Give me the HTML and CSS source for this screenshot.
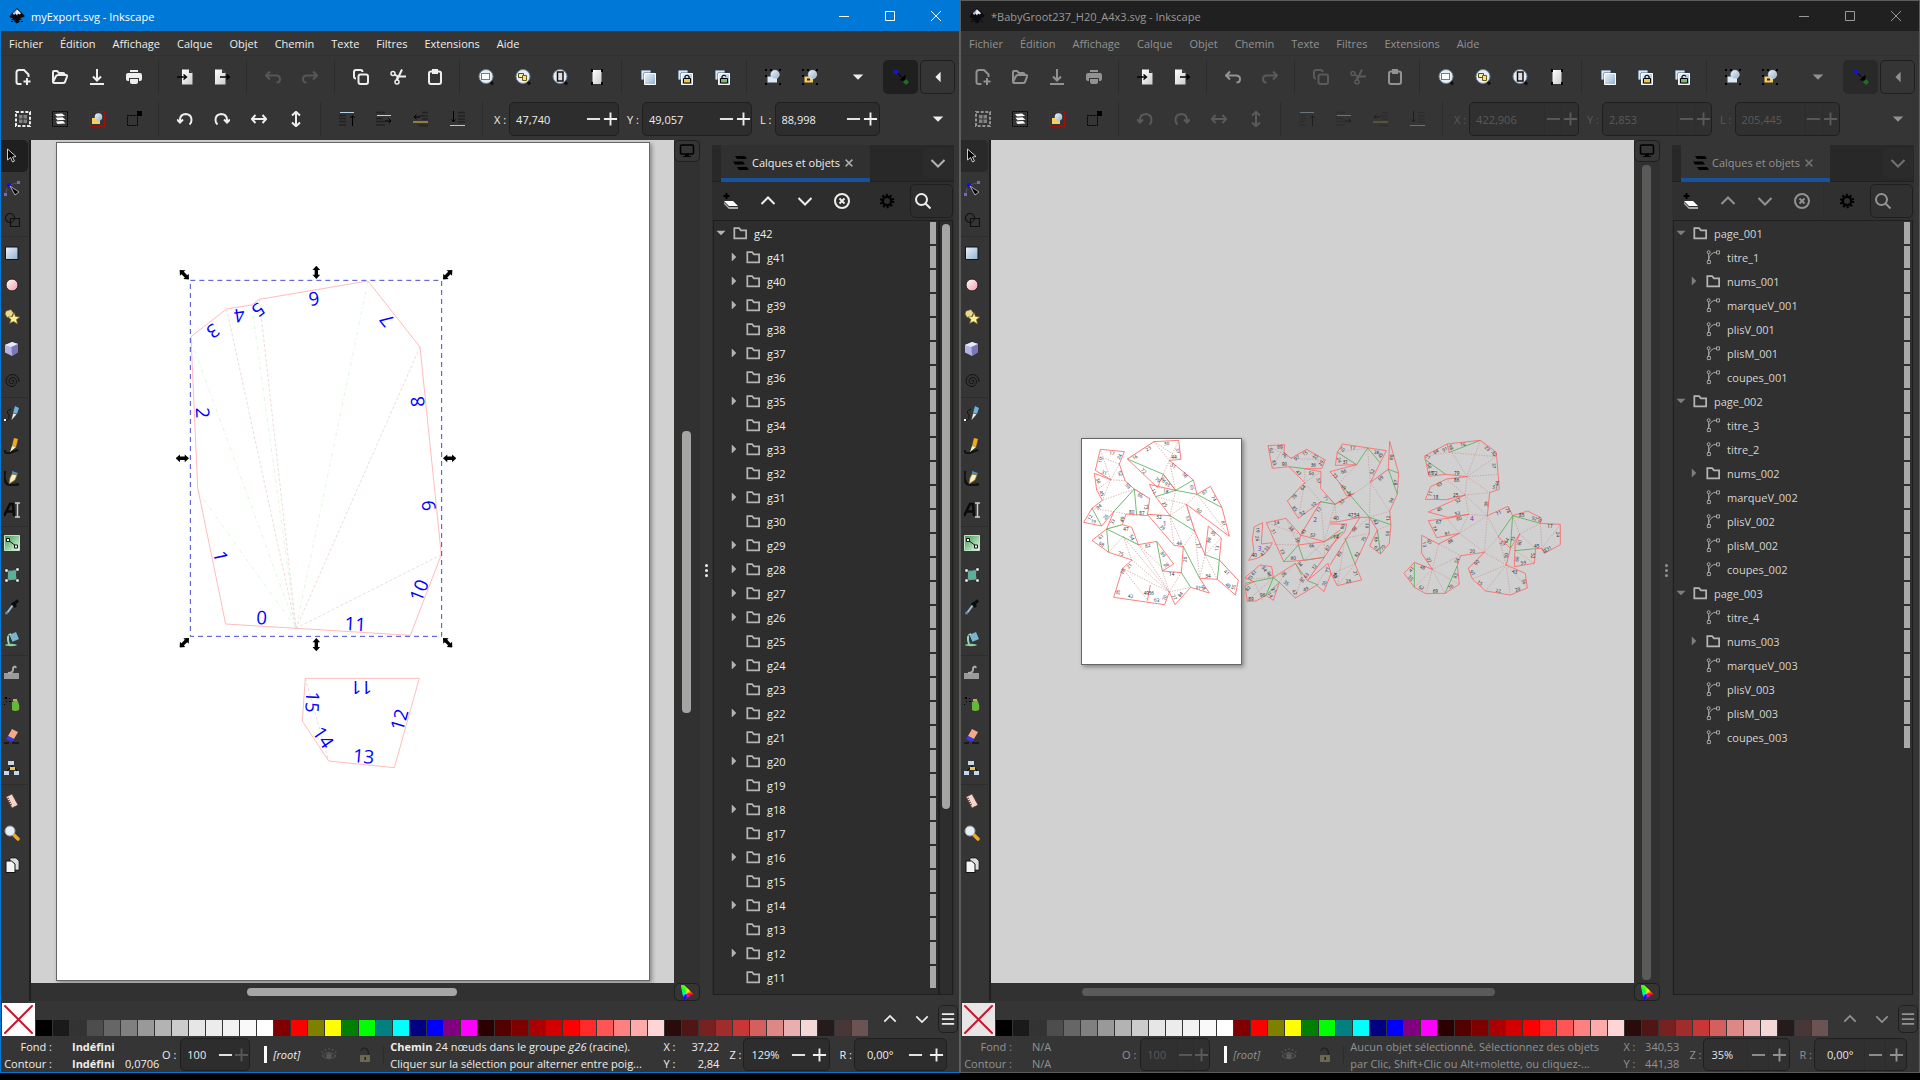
FILE: index.html
```html
<!DOCTYPE html>
<html lang="fr">
<head>
  <meta charset="UTF-8">
  <meta name="viewport" content="width=device-width, initial-scale=1.0">
  <title>Inkscape</title>
  <link rel="stylesheet" href="styles.css">
</head>
<body>
  <svg class="sprite" aria-hidden="true">
    <defs>
      <linearGradient id="g-blue" x1="0" y1="0" x2="1" y2="1"><stop offset="0" stop-color="#eef5fc"/><stop offset="1" stop-color="#8fb0d0"/></linearGradient>
      <linearGradient id="g-pink" x1="0" y1="0" x2="1" y2="1"><stop offset="0" stop-color="#fff"/><stop offset="1" stop-color="#f09aa4"/></linearGradient>
      <linearGradient id="g-page" x1="0" y1="0" x2="1" y2="1"><stop offset="0" stop-color="#fff"/><stop offset="1" stop-color="#ccc"/></linearGradient>
      <linearGradient id="g-green" x1="0" y1="0" x2="1" y2="1"><stop offset="0" stop-color="#3c9a4e"/><stop offset="1" stop-color="#e8f8ea"/></linearGradient>
    </defs>

    <!-- application and window -->
    <symbol id="logo" viewBox="0 0 16 16"><path d="M8 0 15.500 7.500Q16 9 13 9.500L11 10 13 11.500 10 12 11 13.500 8 15.500 5 13.500 6 12.500 2 12 4 10.500 1 9.500Q0 8.500 1 7.500Z" fill="#0a0a12"/><path d="M8 1.200 12 5.200 10.500 6.500 9 5.500 8 7.500 6.500 5.500 5 7 4 5.200Z" fill="#e8eefa"/><path d="M4 5.200 8 1.200 6 6Z" fill="#9aa6c0"/><path d="M2 13h2v1H2zM12 13h2v1h-2z" fill="#0a0a12"/></symbol>
    <symbol id="minimize" viewBox="0 0 16 16"><path d="M3 8.500H13" class="ln1"/></symbol>
    <symbol id="maximize" viewBox="0 0 16 16"><path d="M3.500 3.500h9v9h-9z" class="ln1"/></symbol>
    <symbol id="close" viewBox="0 0 16 16"><path d="M3 3l10 10M13 3 3 13" class="ln1"/></symbol>

    <!-- command bar -->
    <symbol id="new" viewBox="0 0 16 16"><path d="M6.500 15H3.500Q1.500 15 1.500 13V3.500Q1.500 1 4 1H9L13.500 5.500V8M12 9v7M8.500 12.500h7" class="ln2"/></symbol>
    <symbol id="open" viewBox="0 0 16 16"><path d="M1 13V3Q1 2 2 2H5L7 4H11Q12.500 4 12.500 6M1 13 4 7Q4.500 6 6 6H14Q15.500 6 15 7.500L13 13Q12.500 14 11 14H2Q1 14 1 13Z" class="ln2"/></symbol>
    <symbol id="save" viewBox="0 0 16 16"><path d="M8 0V11M4 7.500 8 11.500 12 7.500M1 15H15" class="ln2"/></symbol>
    <symbol id="print" viewBox="0 0 16 16"><path d="M4 1h8v2H4zM2 4H14Q16 4 16 6V10Q16 12 14 12H13V9H3V12H2Q0 12 0 10V6Q0 4 2 4ZM4 10h8v3q0 2-2 2H6q-2 0-2-2z" fill="currentColor"/></symbol>
    <symbol id="import" viewBox="0 0 16 16"><path d="M5 .5H12L15.500 4V15.500H5Z" fill="url(#g-page)"/><path d="M12 .5V4H15.500Z" fill="#333"/><path d="M0 8H9M6.500 5.500 9.500 8 6.500 10.500" fill="none" stroke="#000" stroke-width="1.400"/></symbol>
    <symbol id="export" viewBox="0 0 16 16"><path d="M1 .5H8L11.500 4V15.500H1Z" fill="url(#g-page)"/><path d="M8 .5V4H11.500Z" fill="#333"/><path d="M6 8H15M12.500 5.500 15.500 8 12.500 10.500" fill="none" stroke="#000" stroke-width="1.400"/></symbol>
    <symbol id="undo" viewBox="0 0 16 16"><path d="M5 2.500 1 6.500 5 10.500M1.500 6.500H11Q15 6.500 15 10 15 13.500 11.500 13.500" class="ln2"/></symbol>
    <symbol id="redo" viewBox="0 0 16 16"><path d="M11 2.500 15 6.500 11 10.500M14.500 6.500H5Q1 6.500 1 10 1 13.500 4.500 13.500" class="ln2"/></symbol>
    <symbol id="copy" viewBox="0 0 16 16"><path d="M3 9.500Q1 9.500 1 7.500V3Q1 1 3 1H7.500Q9.500 1 9.500 3" class="ln2"/><rect x="5.500" y="5.500" width="9.500" height="9.500" rx="2" class="ln2"/></symbol>
    <symbol id="cut" viewBox="0 0 16 16"><circle cx="3" cy="4.500" r="2" class="ln15"/><circle cx="7" cy="13" r="2" class="ln15"/><path d="M4.500 5.500 8 7.500H16M7 11 12 0.500M8 7.500 6.500 11" class="ln2"/></symbol>
    <symbol id="paste" viewBox="0 0 16 16"><rect x="2" y="2.500" width="12" height="12.500" rx="2" class="ln2"/><path d="M5 0H11V5H5Z" fill="currentColor"/></symbol>
    <symbol id="lens" viewBox="0 0 16 16"><path d="M12 12 15 15.500" stroke="#111" stroke-width="3"/><circle cx="8" cy="7.500" r="7" fill="#e4eef8" stroke="#6d7f90"/></symbol>
    <symbol id="zoom-selection" viewBox="0 0 16 16"><use href="#lens"/><path d="M3.500 4.500h8v6h-8z" fill="#fff" stroke="#000" stroke-dasharray="1 1"/></symbol>
    <symbol id="zoom-drawing" viewBox="0 0 16 16"><use href="#lens"/><path d="M3.500 4.500h5v4h-5z" fill="#ffe9a8" stroke="#5b4a10"/><path d="M7.500 6.500h4v5h-4z" fill="#fbe08a" stroke="#6b5a10"/></symbol>
    <symbol id="zoom-page" viewBox="0 0 16 16"><use href="#lens"/><path d="M5.500 3h5.500v9H5.500z" fill="#ddd" stroke="#111" stroke-width="1.500"/></symbol>
    <symbol id="zoom-width" viewBox="0 0 16 16"><path d="M3.500 1h9v14h-9z" fill="url(#g-page)"/><path d="M2 0h2v3H2zM12 0h2v3h-2zM2 13h2v3H2zM12 13h2v3h-2z" fill="#000"/></symbol>
    <symbol id="duplicate" viewBox="0 0 16 16"><path d="M1 1h10v3H4v7H1z" fill="#d9e6f2" stroke="#1d3850" stroke-width=".8"/><path d="M4.500 4.500h11v11h-11z" fill="url(#g-blue)" stroke="#fff"/></symbol>
    <symbol id="clone" viewBox="0 0 16 16"><use href="#duplicate"/><path d="M6.500 9.500h7v4.500h-7z" fill="#f5c542" stroke="#000"/><path d="M8 9V7.500Q10 5 12 7.500V9" fill="none" stroke="#000" stroke-width="1.200"/></symbol>
    <symbol id="unlink" viewBox="0 0 16 16"><use href="#duplicate"/><path d="M6.500 9.500h7v4.500h-7z" fill="#7fb86a" stroke="#000"/><path d="M8 9V7.500Q10 5 12 7.500" fill="none" stroke="#000" stroke-width="1.200"/></symbol>
    <symbol id="corners" viewBox="0 0 16 16"><path d="M0 0h2v2H0zM14 0h2v2h-2zM0 14h2v2H0zM14 14h2v2h-2zM5 0h2v2H5zM0 6h2v2H0z" fill="#000"/></symbol>
    <symbol id="group" viewBox="0 0 16 16"><use href="#corners"/><path d="M2.500 7.500h9.500v6H2.500z" fill="#dce8f4"/><circle cx="10" cy="5.500" r="4.200" fill="url(#g-blue)" stroke="#dce8f4" stroke-width=".6"/></symbol>
    <symbol id="ungroup" viewBox="0 0 16 16"><use href="#corners"/><path d="M2.500 7.500h8.500v6H2.500z" fill="#f7cf5a"/><path d="M5 9.500h3v2H5z" fill="#222"/><circle cx="10.500" cy="5.500" r="4.200" fill="url(#g-blue)" stroke="#dce8f4" stroke-width=".6"/></symbol>
    <symbol id="caret-down" viewBox="0 0 16 16"><path d="M2 5H14L8 11Z" fill="currentColor"/></symbol>
    <symbol id="caret-left" viewBox="0 0 16 16"><path d="M11 2V14L5 8Z" fill="currentColor"/></symbol>
    <symbol id="caret-right" viewBox="0 0 16 16"><path d="M5 2V14L11 8Z" fill="currentColor"/></symbol>
    <symbol id="snap" viewBox="0 0 16 16"><path d="M4 4 11 10M12 6.500V11H7.500Z" stroke="#000" fill="#000"/><path d="M3 0 6 3 3 6 0 3Z" fill="#1515d8"/><path d="M13 10 16 13 13 16 10 13Z" fill="#1c7024"/></symbol>

    <!-- selector tool controls -->
    <symbol id="select-all" viewBox="0 0 16 16"><path d="M1 1h14v14H1z" fill="none" stroke="currentColor" stroke-width="2" stroke-dasharray="3 1.660"/><path d="M4 4h3.500v3.500H4zM8.500 4H12v3.500H8.500zM4 8.500h3.500V12H4zM8.500 8.500H12V12H8.500z" fill="#828282"/></symbol>
    <symbol id="select-layers" viewBox="0 0 16 16"><path d="M.5.5h15v15H.5z" fill="none" stroke="#000" stroke-dasharray="2 1"/><path d="M3 3l7-.5 3 2.500L5 5.500zM3.500 6.700l7-.5 3 2.500-8 .5zM4 10.500l7-.5 2.500 2.500-8 .5z" fill="#fff"/></symbol>
    <symbol id="deselect" viewBox="0 0 16 16"><path d="M.5.5h15v15H.5z" fill="none" stroke="#d00000" stroke-dasharray="2 1"/><path d="M3 7h8v6H3z" fill="#f7cf5a"/><circle cx="9.500" cy="6" r="3.800" fill="url(#g-blue)"/></symbol>
    <symbol id="transform" viewBox="0 0 16 16"><path d="M1.500 4.500h10v10h-10z" fill="none" stroke="#000" stroke-dasharray="2 1"/><path d="M11 0h5v5h-5z" fill="#000"/></symbol>
    <symbol id="rotate-left" viewBox="0 0 16 16"><path d="M3 11V8.500Q3.500 3 9 3 14.500 3.500 14.500 9 14.500 12 12.500 13.500M0 8.500 3 11.500 6 8.500" class="ln2"/></symbol>
    <symbol id="rotate-right" viewBox="0 0 16 16"><path d="M13 11V8.500Q12.500 3 7 3 1.500 3.500 1.500 9 1.500 12 3.500 13.500M16 8.500 13 11.500 10 8.500" class="ln2"/></symbol>
    <symbol id="flip-h" viewBox="0 0 16 16"><path d="M1 8H15M4.500 4 .8 8 4.500 12M11.500 4 15.200 8 11.500 12" class="ln2"/></symbol>
    <symbol id="flip-v" viewBox="0 0 16 16"><path d="M8 1V15M4 4.500 8 .8 12 4.500M4 11.500 8 15.200 12 11.500" class="ln2"/></symbol>
    <symbol id="raise-top" viewBox="0 0 16 16"><path d="M0 4.500h7M0 7.500h7M0 10.500h7M0 14h7" stroke="#222" stroke-width="1.500"/><path d="M1 1.500H15" stroke="#b7d3ea"/><path d="M13.500 15V5M11.500 7 13.500 4.500 15.500 7" stroke="#000" fill="none"/></symbol>
    <symbol id="raise" viewBox="0 0 16 16"><path d="M0 1.500h9M0 7.500h7M0 10.500h9M0 14h9" stroke="#222" stroke-width="1.500"/><path d="M1 4.500H15" stroke="#b7d3ea"/><path d="M9 10H14.500M12.500 7.500 15 10 12.500 12" stroke="#000" fill="none"/></symbol>
    <symbol id="lower" viewBox="0 0 16 16"><path d="M9 1.500h6M6 5h9M9 8h6M6 14.500h9" stroke="#222" stroke-width="1.500"/><path d="M0 11H15" stroke="#e8c850"/><path d="M7 6H1M3.500 3.500 1 6 3.500 8" stroke="#000" fill="none"/></symbol>
    <symbol id="lower-bottom" viewBox="0 0 16 16"><path d="M8 1.500h7M8 5h7M8 8h7M8 11h7" stroke="#222" stroke-width="1.500"/><path d="M0 14.500H15" stroke="#e8c850"/><path d="M3.500 0V11M1.500 8.500 3.500 11 5.500 8.500" stroke="#000" fill="none"/></symbol>

    <!-- toolbox -->
    <symbol id="selector" viewBox="0 0 16 16"><path d="M3.500 1V12L6.500 9.500 8.500 14 10.500 13 8.500 9 12 8.500Z" fill="#000" stroke="#ccc"/></symbol>
    <symbol id="node" viewBox="0 0 16 16"><path d="M2 13Q2 4 14 3" fill="none" stroke="#555"/><path d="M3 3.500h4v4H3z" fill="#1010e0"/><path d="M13 1h3v3h-3zM0 13h3v3H0z" fill="#6a6ad8"/><path d="M6 6 15 12 11 15Z" fill="#000" stroke="#ccc" stroke-width=".8"/></symbol>
    <symbol id="builder" viewBox="0 0 16 16"><circle cx="6" cy="6" r="4.500" fill="none" stroke="#111" stroke-width="1.200"/><path d="M6.500 6.500h9v8h-9z" fill="none" stroke="#111" stroke-width="1.200"/></symbol>
    <symbol id="rect" viewBox="0 0 16 16"><path d="M1.500 2h12.500v12.500H1.500z" fill="url(#g-blue)" stroke="#111"/></symbol>
    <symbol id="ellipse" viewBox="0 0 16 16"><circle cx="8" cy="8" r="6" fill="url(#g-pink)" stroke="#222"/></symbol>
    <symbol id="star" viewBox="0 0 16 16"><path d="M2 2 7 .500 9.500 4 7 8.500H3L1 5Z" fill="#e8d890" stroke="#554e22" stroke-width=".6"/><path d="M10 3.500 11.500 7.500 16 8 12.500 10.500 13.500 15 9.500 12.500 5.500 14.500 7 10.500 4 8 8.500 7.500Z" fill="#fbee9e" stroke="#6a5c10" stroke-width=".6"/></symbol>
    <symbol id="box3d" viewBox="0 0 16 16"><path d="M1 4 8 1 14 3V11L8 15 1 11.500Z" fill="#b4b4e4"/><path d="M1 4 8 1 14 3 7.500 6Z" fill="#e8e8ff"/><path d="M7.500 6 14 3V11L8 15Z" fill="#7878b4"/></symbol>
    <symbol id="spiral" viewBox="0 0 16 16"><path d="M8 8.500Q8 7 9.500 7.500 11 9 9 10.500 5.500 11.500 5 8 5.500 4.500 9 4.500 13 5.500 12.500 9.500 11 14 7 13.500 1.500 12 2 7 4 1 9.500 1.500 15 3 15 9" fill="none" stroke="#111"/></symbol>
    <symbol id="pencil" viewBox="0 0 16 16"><path d="M1 15Q6 14 5 9 1 5 7 3" fill="none" stroke="#111"/><path d="M11 0 15 2 13 8 9 7Z" fill="#6fb0dc"/><path d="M9 7 13 8 7 15Z" fill="#eee" stroke="#222" stroke-width=".5"/><path d="M0 13h2v2H0z" fill="#fff"/></symbol>
    <symbol id="brush" viewBox="0 0 16 16"><path d="M1 12Q0 16 6 15L14 12" fill="none" stroke="#111" stroke-width="2"/><path d="M10 0 14 1 12 9 8 8Z" fill="#f2a81c"/><path d="M8 8 12 9 6 14Z" fill="#fff1c4"/></symbol>
    <symbol id="calligraphy" viewBox="0 0 16 16"><path d="M1 1Q-1 10 3 14 8 16 15 14" fill="none" stroke="#111" stroke-width="2.500"/><path d="M8 1 14 3 13 5 8 4Z" fill="#4f8fc0"/><path d="M8 4 13 5 11 10 5 14 6 8Z" fill="#f8edc4" stroke="#8a6a10" stroke-width=".7"/></symbol>
    <symbol id="text" viewBox="0 0 16 16"><path d="M0 14 6 2H9L10 14M3 9.500H9" fill="none" stroke="#0a0a0a" stroke-width="2.500"/><path d="M11 1h5M13.500 1V15M11 15h5" stroke="#ccc" stroke-width="1.500"/></symbol>
    <symbol id="gradient" viewBox="0 0 16 16"><path d="M.5.5h15v15H.5z" fill="url(#g-green)" stroke="#bfe6c4"/><path d="M4 5 12 11" stroke="#111"/><path d="M2.500 3.500h3v3h-3zM10.500 10h3v3h-3z" fill="#fff" stroke="#111"/></symbol>
    <symbol id="mesh" viewBox="0 0 16 16"><path d="M3 3Q8 5 13 2 11 8 13 13 8 12 3 14 5 8 3 3Z" fill="#5fae9a"/><path d="M1 2h3v3H1zM12 1h3v3h-3zM1 12h3v3H1zM12 12h3v3h-3z" fill="#fff" stroke="#111" stroke-width=".5"/></symbol>
    <symbol id="dropper" viewBox="0 0 16 16"><path d="M3 14 9 6" stroke="#9cc0dc" stroke-width="2"/><path d="M8 4 12 8M10 5 14 1.500" stroke="#0a0a0a" stroke-width="3"/><circle cx="2.500" cy="14" r="1.500" fill="#5b87a8"/></symbol>
    <symbol id="bucket" viewBox="0 0 16 16"><path d="M5 4 12 1 15 8 8 11Z" fill="#7ab4d0"/><path d="M7 3Q2 5 5 13" fill="none" stroke="#9ad8b0" stroke-width="2"/><path d="M5 4 8 11" stroke="#234"/><ellipse cx="7" cy="14" rx="6" ry="1.200" fill="#8fd0a2"/></symbol>
    <symbol id="tweak" viewBox="0 0 16 16"><path d="M0 9H15V15H0Z" fill="#9a9a9a"/><path d="M4 9Q10 9 9 4 11 1 12 4" fill="none" stroke="#aaa" stroke-width="2"/></symbol>
    <symbol id="spray" viewBox="0 0 16 16"><path d="M8 6 13 4Q16 8 15 14Q11 16 8 14Z" fill="#66b838"/><path d="M9 3h4v2H9z" fill="#c9a26a"/><path d="M1 1h2v2H1zM5 2h1v1H5zM2 5h1v1H2zM5 5h2v1H5zM0 8h1v1H0z" fill="#000"/></symbol>
    <symbol id="eraser" viewBox="0 0 16 16"><path d="M8 1 14 4 10 11 4 8Z" fill="#f5a88a"/><path d="M4 8 10 11 8 14 2 11Z" fill="#3838e8"/><path d="M0 15H5M8 15H15" stroke="#000"/></symbol>
    <symbol id="connector" viewBox="0 0 16 16"><path d="M8 5V8M3 11 6 8H11L13 11" stroke="#000" fill="none"/><path d="M4 1h6v4H4zM0 11h5v4H0zM10 11h5v4h-5z" fill="#c4d8ec"/><path d="M6 7h5v3H6z" fill="#f2c84a"/></symbol>
    <symbol id="measure" viewBox="0 0 16 16"><path d="M2 4 8 1 14 12 8 15Z" fill="#f4d6cc" stroke="#5a3a30" stroke-width=".7"/><path d="M3 6l2-1M4 8l2-1M5 10l2-1M6 12l2-1" stroke="#5a3a30"/></symbol>
    <symbol id="zoom" viewBox="0 0 16 16"><path d="M9 9 14 14" stroke="#f0a820" stroke-width="3.500" stroke-linecap="round"/><circle cx="6" cy="6" r="5" fill="#e4eef8" stroke="#999"/></symbol>
    <symbol id="pages" viewBox="0 0 16 16"><path d="M6 1H12L15 4V13H6Z" fill="#ddd" stroke="#111" stroke-width=".7"/><path d="M2 4H7.500L11 7V15.500H2Z" fill="#f4f4f4" stroke="#111"/></symbol>

    <!-- canvas corners and docked panel -->
    <symbol id="display" viewBox="0 0 16 16"><rect x="1.500" y="2" width="13" height="9" rx="1" fill="none" stroke="#000" stroke-width="1.500"/><path d="M6 11h4v2h2v1H4v-1h2z" fill="#000"/></symbol>
    <symbol id="layers" viewBox="0 0 16 16"><path d="M2 1H12L14 4H4ZM0 6.500H10L12 9.500H2ZM4 12H14L16 15H6Z" fill="#000"/></symbol>
    <symbol id="cross" viewBox="0 0 16 16"><path d="M3.500 3.500l9 9M12.500 3.500l-9 9" class="ln2"/></symbol>
    <symbol id="chevron-down" viewBox="0 0 16 16"><path d="M1.500 5 8 11.500 14.500 5" class="ln2"/></symbol>
    <symbol id="chevron-up" viewBox="0 0 16 16"><path d="M1.500 11 8 4.500 14.500 11" class="ln2"/></symbol>
    <symbol id="add-layer" viewBox="0 0 16 16"><path d="M3.500 0V6M.500 3H6.500" stroke="#000" stroke-width="2"/><path d="M1 8H10L15 13H6Z" fill="#fff"/><path d="M1 9 6 14H15V16H6L1 11Z" fill="#aaa"/></symbol>
    <symbol id="delete" viewBox="0 0 16 16"><circle cx="8" cy="8" r="7" class="ln2"/><path d="M5.500 5.500l5 5M10.500 5.500l-5 5" class="ln2"/></symbol>
    <symbol id="gear" viewBox="0 0 16 16"><circle cx="8" cy="8" r="4.200" fill="none" stroke="#000" stroke-width="2.400"/><circle cx="8" cy="8" r="6.200" fill="none" stroke="#000" stroke-width="2.200" stroke-dasharray="2 1.900"/></symbol>
    <symbol id="search" viewBox="0 0 16 16"><circle cx="6.500" cy="6.500" r="5.500" class="ln2"/><path d="M10.500 10.500 15.500 15.500" class="ln2"/></symbol>
    <symbol id="folder" viewBox="0 0 16 16"><path d="M1.500 14V2.500H7L9 5H15V14Z" class="ln2"/></symbol>
    <symbol id="path" viewBox="0 0 16 16"><path d="M3 12V4M3 11Q4 3 12 2.500" class="ln1"/><path d="M1.500 12h3.500v3.500H1.500zM12 1h3.500v3.500H12z" class="ln1"/><circle cx="3" cy="2.500" r="1.700" class="ln1"/></symbol>
    <symbol id="menu" viewBox="0 0 16 16"><path d="M1 2.500H15M1 8H15M1 13.500H15" class="ln2"/></symbol>
    <symbol id="minus" viewBox="0 0 16 16"><path d="M1 8H15" class="ln2"/></symbol>
    <symbol id="plus" viewBox="0 0 16 16"><path d="M1 8H15M8 1V15" class="ln2"/></symbol>
    <symbol id="eye" viewBox="0 0 16 16"><path d="M1 9Q8 2 15 9 8 14.500 1 9Z" class="ln1"/><circle cx="8" cy="9" r="2.800" fill="currentColor"/><path d="M2 6 .5 4M5 4 4 2M8 3V1M11 4 12 2M14 6 15.500 4" class="ln1"/></symbol>
    <symbol id="lock" viewBox="0 0 16 16"><path d="M4 4Q5 0 9 1.500 12 3 11.500 8" fill="none" stroke="#222" stroke-width="1.500"/><path d="M3 8h10v7H3z" fill="#6a6752"/><path d="M7.500 10h1.500v3H7.500z" fill="#222"/></symbol>

    <symbol id="handle" viewBox="-7 -7 14 14"><path d="M0-7 4-2.500H1.800V2.500H4L0 7-4 2.500H-1.800V-2.500H-4Z" fill="#000"/></symbol>
  </svg>

  <main class="desktop"></main>

  <template id="window-template">
    <section class="window">
      <header class="titlebar">
        <svg class="icon"><use href="#logo"/></svg>
        <h1 class="title"></h1>
        <div class="window-buttons" data-icons="minimize maximize close"></div>
      </header>
      <nav class="menubar">
        <a href="#">Fichier</a><a href="#">Édition</a><a href="#">Affichage</a><a href="#">Calque</a><a href="#">Objet</a><a href="#">Chemin</a><a href="#">Texte</a><a href="#">Filtres</a><a href="#">Extensions</a><a href="#">Aide</a>
      </nav>
      <div class="toolbar">
        <div class="commands" data-icons="new open save print | import export | undo redo | copy cut paste | zoom-selection zoom-drawing zoom-page zoom-width | duplicate clone unlink | group ungroup"></div>
        <div class="toolbar-end" data-icons="caret-down snap caret-left"></div>
      </div>
      <div class="toolbar">
        <div class="commands" data-icons="select-all select-layers deselect transform | rotate-left rotate-right flip-h flip-v | raise-top raise lower lower-bottom |"></div>
        <div class="geometry"></div>
        <div class="toolbar-end" data-icons="caret-down"></div>
      </div>

      <div class="workspace">
        <div class="toolbox" data-icons="selector node builder | rect ellipse star box3d spiral | pencil brush calligraphy text | gradient mesh dropper bucket | tweak spray eraser connector | measure zoom pages"></div>
        <div class="canvas-area">
          <div class="canvas"></div>
          <div class="canvas-side">
            <button class="corner-btn display-btn" aria-label="display"><svg class="icon"><use href="#display"/></svg></button>
            <div class="scroll scroll-v"><div class="thumb"></div></div>
          </div>
          <div class="scroll scroll-h"><div class="thumb"></div></div>
          <button class="corner-btn" aria-label="color management"><span class="color-fan"></span></button>
        </div>
        <div class="splitter"><i></i><i></i><i></i></div>
        <aside class="panel">
          <div class="tabs">
            <div class="tab">
              <svg class="icon"><use href="#layers"/></svg>
              <span>Calques et objets</span>
              <button class="tab-close" aria-label="close tab"><svg class="icon"><use href="#cross"/></svg></button>
            </div>
            <button class="tab-menu" aria-label="tabs"><svg class="icon"><use href="#chevron-down"/></svg></button>
          </div>
          <div class="panel-bar">
            <div class="panel-tools" data-icons="add-layer chevron-up chevron-down delete | gear"></div>
            <label class="search"><svg class="icon"><use href="#search"/></svg><input type="text" aria-label="search"></label>
          </div>
          <div class="tree-box">
            <ul class="tree"></ul>
          </div>
        </aside>
      </div>

      <div class="palette">
        <button class="no-color" aria-label="none"><svg viewBox="0 0 33 33"><path d="M3 3 30 30M30 3 3 30"/></svg></button>
        <div class="swatches"></div>
        <div class="palette-nav" data-icons="chevron-up chevron-down menu"></div>
      </div>
      <footer class="status"></footer>
    </section>
  </template>

  <!-- flattened piece, first document -->
  <template id="drawing-export">
    <svg class="drawing">
      <rect class="page" x="25.500" y="2.500" width="593" height="838"/>
      <svg x="139" y="110" width="320" height="540" viewBox="0 0 960 1620" overflow="visible">
        <g class="folds-v"><path d="M83 723 378 1135M63 271 378 1135M245 165 378 1135M594 93 378 1135"/></g>
        <g class="folds-m"><path d="M170 177 378 1135M268 148 378 1135M750 291 378 1135M814 914 378 1135"/><path d="M406 1285 476 1533"/></g>
        <path class="outline" d="M167 1122 83 713 63 260 170 177 245 165 268 148 594 93 750 291 814 914 721 1156Z"/>
        <path class="outline" d="M406 1285H748L673 1553 476 1533 397 1413Z"/>
        <g class="edge-numbers"></g>
        <path class="selection" d="M61 91H815V1159H61Z"/>
        <g class="handles"></g>
      </svg>
    </svg>
  </template>

  <!-- whole unfolded model, second document -->
  <template id="drawing-groot">
    <svg class="drawing">
      <rect class="page" x="90.500" y="298.500" width="160" height="226"/>
      <svg class="pattern" x="79" y="290" width="270" height="240" viewBox="0 0 810 720" overflow="visible">
        <path class="pm" d="M122 149 91 58M122 149 148 102M91 80 148 102M122 149 165 152M122 149 80 180M122 149 97 211M193 177 97 211M131 245 193 177M66 235 131 245M239 206 193 177M131 245 168 252M110 297 157 284M116 367 160 320M160 320 298 486M160 320 185 390M160 320 205 344M205 344 298 486M205 344 284 420M158 415 298 486M158 415 232 510M186 390 298 486M298 486 277 423M298 486 334 428M298 486 362 472M252 35 298 91M252 35 172 87M252 35 333 88M298 91 280 133M326 31 298 91M298 91 317 181M317 181 262 172M257 200 349 223M317 181 300 257M349 223 300 257M300 257 312 346M300 257 340 350M349 223 381 193M381 193 478 319M374 303 340 350M374 303 389 445M405 374 389 445M405 374 442 448M405 374 454 324M448 390 505 451M349 223 374 303"/>
        <path class="pv" d="M172 87 280 133 317 181 370 150M317 181 257 200M317 181 381 193 456 233M300 257 374 303M193 177 131 245M193 177 200 256M66 235 95 288M110 297 116 367M110 297 205 344M110 297 157 284M260 334 277 423M334 428 362 472M340 350 389 445M405 374 448 390 442 448"/>
        <path class="pc" d="M91 58 163 65 148 102 165 152 193 177 239 206 232 257 168 252 157 284 185 292 205 344 260 334 311 402 277 423 334 428 340 350 312 346 232 253 300 257 257 200 238 163 317 181 280 133 262 172 172 87 252 35 326 31 333 88 298 91 370 150 381 193 421 169 456 233 478 319 349 223 374 303 405 374 415 288 454 324 448 390 505 451 496 495 442 448 389 445 418 489 362 472 315 524 298 486 284 524 131 502 158 415 186 390 116 367 66 331 110 297 131 245 95 288 41 277 66 235 97 211 80 180 73 130 122 149 76 121ZM241 465 232 512"/>

        <path class="pm" d="M644 44 607 115M594 47 663 85M663 85 710 58M663 85 766 90M710 58 760 113M704 116 704 158M704 158 753 125M704 158 652 213M704 158 752 215M704 158 685 265M752 215 795 223M752 215 692 315M589 278 692 315M648 265 685 345M612 343 685 345M752 215 763 335M795 223 763 335M692 315 763 382M763 335 763 382M763 335 701 391M763 382 712 452M676 400 627 455M676 504 695 440M740 466 774 412M610 443 570 405M610 443 527 447M610 443 530 514M552 455 580 514"/>
        <path class="pv" d="M657 110 704 116M752 215 795 223M685 345 641 395M685 345 701 391 763 382M763 335 810 312M526 460 610 443 588 496 628 457 610 443M676 400 695 435M712 452 745 465"/>
        <path class="pc" d="M594 47 644 44 642 67 663 85 710 58 766 90 755 116 704 116 753 125 752 175 795 223 810 215M657 110 607 115 594 47M657 110 704 158 652 213 685 265 752 215 692 315 648 265 589 278 641 395 701 391 763 382 712 452 676 400 610 443 605 410 570 405 525 443 552 455 525 467 532 514 558 513 588 496 610 511 628 457 676 504 740 466 762 485 783 430 774 400 712 452M692 315 763 335 810 300M763 382 810 310M692 315 685 345 763 335"/>
        <path class="pc" d="M578 278 552 291 547 330 552 365 536 391Q590 385 607 338L574 342Z"/>
        <g class="tiny-numbers" data-sheet="left"></g>
        <text class="piece" x="278" y="288">1</text><text class="piece" x="730" y="276">2</text><text class="piece" x="563" y="364">3</text>
      </svg>
      <svg class="pattern" x="339" y="290" width="250" height="200" viewBox="0 0 750 600" overflow="visible">
        <path class="pm" d="M22 67 113 54M80 104 22 67M80 104 28 158M113 54 121 157M121 157 60 200M121 157 118 262M121 157 179 244M175 118 121 157M179 244 118 262M60 200 15 223M118 262 45 325M118 262 142 300M142 300 183 284M118 310 45 325M45 325 22 467M75 402 22 467M142 300 152 372M15 223 20 276M75 402 5 430"/>
        <path class="pv" d="M22 67 80 104 113 54 150 98M28 158 118 262 183 284M175 118 205 129M175 118 202 192M142 300 152 372M45 325 75 402M0 325 40 305"/>
        <path class="pc" d="M37 42 169 62 121 157 175 118 179 34 206 129 202 192 179 244 183 284 178 340 152 372 119 348 142 300 118 262 118 310 75 402 95 450 22 467 0 425M37 42 22 67 16 106 80 104 0 125 28 158 50 198 73 190 15 223 0 208M0 276 20 276 90 262 0 405M118 262 64 262M0 282 50 282 45 305 0 350"/>

        <path class="pm" d="M351 42 411 140M358 67 497 80M284 78 358 67M451 31 497 80M451 31 411 140M497 80 411 140M502 133 411 140M411 140 405 195M411 140 479 188M405 195 350 148M405 195 350 208M405 195 479 188M405 195 472 257M405 195 416 253M416 253 472 257M416 253 388 310M353 268 388 310M388 310 472 257M388 310 463 367M388 310 326 342M326 342 307 418M326 342 392 377M307 418 275 370M307 418 392 377M307 418 388 463M307 418 345 490M307 418 288 490M307 418 253 472M307 418 253 397M472 257 463 367M472 257 505 320M505 320 463 367M505 320 529 405M463 367 529 405M463 367 415 415M529 405 427 447M529 405 467 483M529 405 541 495M529 405 592 474M569 312 548 257M569 312 631 280M569 312 555 362M569 312 617 356M631 280 636 355M691 283 636 355M555 362 613 400"/>
        <path class="pv" d="M358 67 451 31M284 88 347 133M548 257 505 320M548 257 541 355M548 257 631 280M555 362 617 356M253 397 253 472M382 407 345 490"/>
        <path class="pc" d="M284 78 351 42 451 31 499 67 508 178 479 188 472 257 534 229 548 257 593 243 634 264 631 280 691 283 691 344 643 370 634 355 617 356 613 400 553 410 555 345 569 312 541 355 505 320M541 355 529 405 586 430 592 474 541 495 467 483 427 447 415 415 463 367 392 377 382 407 388 463 345 490 288 491 253 472 222 430 253 397 307 418 275 370V316L326 342 388 310 320 323 295 272 353 265 416 253 353 262 295 246 405 195 350 209 286 208 302 170 350 147 411 140 347 133 297 139 284 78M351 42 358 67"/>
        <g class="tiny-numbers" data-sheet="right"></g>
        <text class="piece" x="420" y="272">4</text>
      </svg>
    </svg>
  </template>

  <script src="script.js"></script>
</body>
</html>
```
FILE: styles.css
```css
:root {
  --chrome: #353535;
  --panel: #2d2d2d;
  --line: #1f1f1f;
  --soft-line: #2c2c2c;
  --text: #eeeeec;
  --dim: #575757;
  --thumb: #a5a5a3;
}

* {
  box-sizing: border-box;
}

body {
  margin: 0;
  background: #000;
  font-family: "Open Sans", "Noto Sans", sans-serif;
  font-size: 11px;
  line-height: 17px;
}

.sprite {
  position: absolute;
  width: 0;
  height: 0;
}

.ln1, .ln15, .ln2 {
  fill: none;
  stroke: currentColor;
}

.ln15 {
  stroke-width: 1.5;
}

.ln2 {
  stroke-width: 2;
}

.desktop {
  display: grid;
  grid-template-columns: 1fr 1fr;
  height: 100vh;
  padding-bottom: 7px;
}

.window {
  display: flex;
  flex-direction: column;
  min-width: 0;
  min-height: 0;
  border: 1px solid #0078d7;
  background: var(--chrome);
  color: var(--text);
}

.window.inactive {
  --text: #929292;
  --dim: #5a5a5a;
  --panel: #303030;
  --thumb: #5a5a58;
  border-color: #5c5c5c;
}

.icon {
  width: 16px;
  height: 16px;
  flex: none;
  display: block;
}

button {
  display: flex;
  align-items: center;
  justify-content: center;
  flex: none;
  padding: 0;
  border: 0;
  background: none;
  color: inherit;
  font: inherit;
}

button:disabled {
  color: var(--dim);
}

input {
  min-width: 0;
  padding: 0;
  border: 0;
  outline: 0;
  background: none;
  color: inherit;
  font: inherit;
}

/* title and menus */
.titlebar {
  display: flex;
  align-items: center;
  height: 30px;
  padding-left: 8px;
  gap: 6px;
  background: #0078d7;
  color: #fff;
}

.inactive .titlebar {
  background: #202020;
  color: #999;
}

.title {
  flex: 1;
  margin: 0;
  font-size: 11px;
  font-weight: 400;
}

.window-buttons {
  display: flex;
}

.window-buttons button {
  width: 46px;
  height: 30px;
}

.menubar {
  display: flex;
  height: 25px;
  padding: 4px 8px;
  gap: 17px;
  border-bottom: 1px solid #303030;
}

.menubar a {
  color: inherit;
  text-decoration: none;
}

/* toolbars */
.toolbar {
  display: flex;
  align-items: center;
  height: 42px;
  padding: 0 4px 0 3px;
}

.commands, .toolbar-end, .geometry, .panel-tools, .palette-nav {
  display: flex;
  align-items: center;
}

.commands button {
  width: 37px;
  height: 34px;
}

.sep {
  width: 1px;
  height: 34px;
  margin: 0 7px 0 6px;
  background: var(--soft-line);
}

.toolbar-end {
  margin-left: auto;
  gap: 2px;
}

.toolbar-end button {
  width: 35px;
  height: 34px;
}

.toolbar-end .icon {
  width: 14px;
}

.toolbar-end .btn-snap {
  margin-left: 6px;
  border-radius: 5px;
  background: #1f1f1f;
}

.toolbar-end .btn-snap .icon {
  width: 16px;
}

.inactive .toolbar-end .btn-snap {
  background: #292929;
}

.btn-caret-left {
  border: 1px solid var(--line);
  border-radius: 5px;
}

.inactive .btn-raise-top, .inactive .btn-raise,
.inactive .btn-lower, .inactive .btn-lower-bottom {
  opacity: .4;
}

.geometry {
  gap: 8px;
  margin-left: 4px;
}

.inactive .geometry {
  color: var(--dim);
}

.field {
  display: flex;
  align-items: center;
  gap: 3px;
  white-space: nowrap;
}

.spin {
  display: flex;
  height: 34px;
  border: 1px solid var(--line);
  border-radius: 5px;
  background: var(--panel);
}

.spin input {
  width: 74px;
  padding-left: 6px;
}

.geometry .field:last-child input {
  width: 69px;
}

.spin button {
  width: 17px;
  border-left: 1px solid var(--soft-line);
}

.spin .icon {
  width: 15px;
}

.spin.off {
  color: var(--dim);
}

/* work area */
.workspace {
  display: flex;
  flex: 1;
  min-height: 0;
}

.toolbox {
  display: flex;
  flex-direction: column;
  width: 30px;
  border-right: 2px solid var(--line);
}

.toolbox button {
  width: 27px;
  height: 32px;
  padding-right: 5px;
}

.toolbox .sep {
  width: 27px;
  height: 1px;
  margin: 0;
}

.btn-selector {
  border-radius: 0 5px 5px 0;
  background: #1f1f1f;
}

.inactive .btn-selector {
  background: #292929;
}

.canvas-area {
  display: grid;
  grid-template-columns: 1fr 26px;
  grid-template-rows: 1fr 18px;
  flex: 1;
  min-width: 0;
  background: #313131;
}

.canvas {
  overflow: hidden;
  background: #d1d1d1;
}

.canvas-side {
  display: flex;
  flex-direction: column;
}

.corner-btn {
  width: 26px;
  height: 18px;
  border: 1px solid var(--line);
  border-radius: 5px;
  background: var(--chrome);
}

.display-btn {
  height: 22px;
}

.scroll {
  display: grid;
}

.scroll-v {
  flex: 1;
  padding: 0 9px 0 8px;
}

.scroll-h {
  padding: 5px 0;
}

.scroll-v .thumb {
  grid-row: 2;
}

.scroll-h .thumb {
  grid-column: 2;
}

.thumb {
  border-radius: 4px;
  background: var(--thumb);
}

.color-fan {
  width: 13px;
  height: 15px;
  background: conic-gradient(at 42% 58%, #8f0, #ff0 30deg, #f00 100deg, #f0f 150deg, #00f 205deg, #0ff 260deg, #0f4 315deg, #8f0);
  clip-path: polygon(0 0, 30% 5%, 100% 65%, 25% 100%);
}

.splitter {
  display: flex;
  flex-direction: column;
  align-items: center;
  justify-content: center;
  gap: 2px;
  width: 12px;
}

.splitter i {
  width: 3px;
  height: 3px;
  border-radius: 50%;
  background: var(--text);
}

/* docked layers panel */
.panel {
  display: flex;
  flex-direction: column;
  width: 242px;
  margin: 5px 5px 6px 0;
  background: var(--panel);
}

.tabs {
  display: flex;
  justify-content: space-between;
  height: 37px;
  padding: 0 1px 0 9px;
  border-bottom: 1px solid var(--line);
  background: #282828;
}

.tab {
  display: flex;
  align-items: center;
  width: 149px;
  height: 37px;
  padding: 2px 0 0 12px;
  gap: 3px;
  border-bottom: 4px solid #15539e;
  background: #303030;
}

.inactive .tab {
  background: var(--chrome);
}

.tab-close {
  opacity: .65;
}

.tab-close .icon {
  width: 12px;
}

.tab-menu {
  width: 30px;
  height: 30px;
  margin-top: 3px;
  border-radius: 5px;
  background: #2d2d2d;
  opacity: .7;
}

.panel-bar {
  display: flex;
  align-items: center;
  justify-content: space-between;
  height: 38px;
  padding: 0 1px 0 0;
}

.panel-tools button {
  width: 37px;
  height: 34px;
}

.panel-tools .sep {
  margin: 0 4px 0 3px;
}

.search {
  display: flex;
  align-items: center;
  width: 43px;
  height: 34px;
  padding-left: 4px;
  border: 1px solid var(--line);
  border-radius: 5px;
}

.search input {
  width: 16px;
}

.tree-box {
  display: flex;
  flex: 1;
  min-height: 0;
  margin: 0 1px;
  border: 1px solid var(--line);
}

.tree {
  flex: 1;
  margin: 0;
  padding: 0;
  overflow: hidden;
  list-style: none;
}

.tree li {
  display: flex;
  align-items: center;
  height: 24px;
  padding-right: 2px;
}

.tree .child {
  padding-left: 13px;
}

.tree .twisty {
  width: 14px;
  height: 12px;
  margin-right: 5px;
}

.tree .icon, .tree .twisty {
  color: #b4b4b2;
}

.inactive .twisty {
  opacity: .6;
}

.tree .type {
  width: 14px;
  margin-right: 7px;
}

.inactive .tree {
  color: #d4d4d2;
}

.mark {
  width: 6px;
  height: 22px;
  margin-left: auto;
  background: #a9a9a9;
}

.tree-scroll {
  flex: none;
  width: 14px;
  padding: 0 2px;
  border-left: 2px solid var(--line);
}

.tree-scroll .thumb {
  width: 8px;
}

/* palette */
.palette {
  display: flex;
  align-items: flex-end;
  height: 36px;
  padding: 0 1px 1px;
}

.no-color {
  width: 33px;
  height: 33px;
  margin-right: 1px;
  background: #fff;
}

.no-color path {
  stroke: #c4162c;
  stroke-width: 2;
  stroke-linecap: round;
}

.inactive .no-color {
  background: #e6e6e6;
}

.swatches {
  display: flex;
  gap: 1px;
}

.swatch {
  width: 16px;
  height: 16px;
}

.palette-nav {
  margin-left: auto;
}

.palette-nav button {
  width: 32px;
  height: 34px;
}

.palette-nav .icon {
  width: 14px;
}

.palette-nav .btn-menu {
  width: 20px;
  height: 28px;
  border: 1px solid var(--line);
  border-radius: 5px;
}

/* status bar */
.status {
  display: flex;
  align-items: center;
  height: 35px;
  padding-right: 12px;
}

.style-readout {
  display: grid;
  grid-template-columns: 51px 73px 37px;
  flex: none;
  margin: 0;
}

.style-readout dt {
  text-align: right;
  white-space: nowrap;
}

.style-readout dd {
  margin: 0;
}

.style-readout .value {
  padding-left: 20px;
}

.status .spin {
  height: 33px;
}

.status .field {
  gap: 2px;
}

.status .field-o {
  gap: 4px;
}

.spin-o input {
  width: 36px;
}

.spin-o button {
  width: 16px;
}

.spin-z input {
  width: 43px;
  padding-left: 7px;
}

.spin-r input {
  width: 49px;
  padding-left: 12px;
}

.spin-z button, .spin-r button {
  width: 21px;
}

.inactive .spin-z input, .inactive .spin-r input {
  color: #e4e4e2;
}

.status .field-r {
  margin-left: 9px;
}

.layer {
  display: flex;
  align-items: center;
  flex: none;
  width: 120px;
  margin-left: 14px;
  border-right: 1px solid var(--soft-line);
}

.layer-color {
  width: 3px;
  height: 17px;
  margin-right: 6px;
  background: #fff;
}

.layer em {
  width: 38px;
}

.layer button {
  width: 36px;
  color: var(--dim);
}

.message {
  flex: 1;
  min-width: 0;
  margin: 0;
  padding-left: 6px;
  white-space: pre;
}

.coords {
  display: grid;
  grid-template-columns: 20px 36px;
  flex: none;
  margin: 0 10px 0 0;
}

.coords dt, .coords dd {
  margin: 0;
}

.coords dd {
  text-align: right;
}

/* drawings */
.drawing {
  display: block;
  width: 100%;
  height: 100%;
}

.page {
  fill: #fff;
  stroke: #666;
  filter: drop-shadow(2px 2px 2px rgba(0, 0, 0, .35));
}

.outline {
  fill: none;
  stroke: #ffbcbc;
  stroke-width: 3;
}

.folds-v {
  fill: none;
  stroke: #dcfadc;
  stroke-width: 3;
  stroke-dasharray: 12 8 3 8;
}

.folds-m {
  fill: none;
  stroke: #efdcdc;
  stroke-width: 3;
  stroke-dasharray: 9 6;
}

.edge-numbers {
  fill: #00f;
  font-size: 56px;
  text-anchor: middle;
}

.selection {
  fill: none;
  stroke: #4a4ad0;
  stroke-width: 3;
  stroke-dasharray: 15 12;
}

.pattern path {
  fill: none;
  stroke-width: 2.5;
  stroke-linejoin: round;
}

.pattern .pc {
  stroke: #f66;
}

.pattern .pm {
  stroke: #c89090;
  stroke-width: 2;
  stroke-dasharray: 4 4;
}

.pattern .pv {
  stroke: #58b058;
}

.tiny-numbers {
  fill: #222;
  font-size: 14px;
  text-anchor: middle;
}

.piece {
  fill: #7030b0;
  font-size: 20px;
}
```
FILE: script.js
```js
const SWATCHES = ('000 1a1a1a 333 4d4d4d 666 808080 999 b3b3b3 ccc e6e6e6 ececec f2f2f2 f9f9f9 fff ' +
  '800000 f00 808000 ff0 008000 0f0 008080 0ff 000080 00f 800080 f0f ' +
  '2b0000 500 800000 a00 d40000 f00 ff2a2a f55 ff8080 faa ffd5d5 ' +
  '280b0b 501616 782121 a02c2c c83737 d35f5f de8787 e9afaf f4d7d7 241c1c 483737 6c5353').split(' ');

// Tree rows: "-" open group, "+" closed group, "=" leaf group, "~" path
const exportTree = ['-g42'];
const closed = [41, 40, 39, 37, 35, 33, 31, 29, 28, 27, 26, 24, 22, 20, 18, 16, 14, 12];
for (let i = 41; i > 10; i--) exportTree.push((closed.includes(i) ? '+g' : '=g') + i);

const page = (n, titles) => ['-page_' + n, ...titles.map(t => '~titre_' + t), '+nums_' + n,
  '~marqueV_' + n, '~plisV_' + n, '~plisM_' + n, '~coupes_' + n];

const windows = [
  {
    title: 'myExport.svg - Inkscape',
    drawing: 'drawing-export',
    geometry: ['47,740', '49,057', '88,998'],
    tree: exportTree,
    treeScroll: '3fr 583fr 185fr',
    scrollV: '269fr 282fr 270fr',
    scrollH: '216fr 210fr 217fr',
    disabled: ['undo', 'redo'],
    paint: '<b>Indéfini</b>',
    strokeWidth: '0,0706',
    message: '<b>Chemin</b> 24 nœuds dans le groupe <i>g26</i> (racine).\nCliquer sur la sélection pour alterner entre poig...',
    x: '37,22', y: '2,84', zoom: '129%'
  },
  {
    title: '*BabyGroot237_H20_A4x3.svg - Inkscape',
    inactive: true,
    drawing: 'drawing-groot',
    geometry: ['422,906', '2,853', '205,445'],
    tree: [...page('001', [1]), ...page('002', [3, 2]), ...page('003', [4])],
    scrollV: '3fr 815fr 3fr',
    scrollH: '91fr 413fr 139fr',
    disabled: ['redo', 'copy', 'cut', 'rotate-left', 'rotate-right', 'flip-h', 'flip-v'],
    paint: 'N/A',
    strokeWidth: '',
    message: 'Aucun objet sélectionné. Sélectionnez des objets\npar Clic, Shift+Clic ou Alt+molette, ou cliquez-...',
    x: '340,53', y: '441,38', zoom: '35%'
  }
];

const icon = (name, cls = 'icon') => `<svg class="${cls}"><use href="#${name}"/></svg>`;

function spin(id, label, value, kind, off) {
  const atMax = kind === 'o' ? 'disabled' : '';
  return `<div class="field field-${kind}"><label for="${id}">${label} :</label>
    <div class="spin spin-${kind} ${off ? 'off' : ''}"><input type="text" id="${id}" value="${value}">
    <button aria-label="moins">${icon('minus')}</button><button aria-label="plus" ${atMax}>${icon('plus')}</button></div></div>`;
}

function treeRow(row) {
  const kind = row[0];
  const twisty = { '-': icon('caret-down', 'twisty'), '+': icon('caret-right', 'twisty') }[kind] || '<span class="twisty"></span>';
  return `<li class="${kind === '-' ? 'root' : 'child'}">${twisty}${icon(kind === '~' ? 'path' : 'folder', 'icon type')}` +
    `<span>${row.slice(1)}</span><span class="mark"></span></li>`;
}

windows.forEach((win, n) => {
  const el = document.getElementById('window-template').content.cloneNode(true).firstElementChild;
  const $ = sel => el.querySelector(sel);
  el.classList.toggle('inactive', !!win.inactive);
  $('.title').textContent = win.title;

  el.querySelectorAll('[data-icons]').forEach(bar => {
    bar.innerHTML = bar.dataset.icons.split(' ').map(name => name === '|'
      ? '<span class="sep"></span>'
      : `<button class="btn-${name}" aria-label="${name}" ${win.disabled.includes(name) ? 'disabled' : ''}>${icon(name)}</button>`).join('');
  });

  $('.geometry').innerHTML = ['X', 'Y', 'L'].map((l, i) => spin(`geo-${l}-${n}`, l, win.geometry[i], 'geo', win.inactive)).join('');
  $('.canvas').append(document.getElementById(win.drawing).content.cloneNode(true));
  $('.scroll-v').style.gridTemplateRows = win.scrollV;
  $('.scroll-h').style.gridTemplateColumns = win.scrollH;

  $('.tree').innerHTML = win.tree.map(treeRow).join('');
  if (win.treeScroll) {
    $('.tree-box').insertAdjacentHTML('beforeend',
      `<div class="scroll scroll-v tree-scroll" style="grid-template-rows: ${win.treeScroll}"><div class="thumb"></div></div>`);
  }

  $('.swatches').innerHTML = SWATCHES.map(c => `<span class="swatch" style="background: #${c}"></span>`).join('');

  $('.status').innerHTML = `
    <dl class="style-readout">
      <dt>Fond :</dt><dd class="value">${win.paint}</dd><dd></dd>
      <dt>Contour :</dt><dd class="value">${win.paint}</dd><dd>${win.strokeWidth}</dd>
    </dl>
    ${spin('opacity-' + n, 'O', '100', 'o', win.inactive)}
    <div class="layer"><span class="layer-color"></span><em>[root]</em>
      <button aria-label="visible">${icon('eye')}</button><button aria-label="verrou">${icon('lock')}</button></div>
    <p class="message">${win.message}</p>
    <dl class="coords"><dt>X :</dt><dd>${win.x}</dd><dt>Y :</dt><dd>${win.y}</dd></dl>
    ${spin('zoom-' + n, 'Z', win.zoom, 'z')}
    ${spin('rotation-' + n, 'R', '0,00°', 'r')}`;

  document.querySelector('.desktop').append(el);
});

// label, x, y, rotation
const edgeNumbers = [
  [0, 275, 1103, 3], [1, 152, 918, 78], [2, 98, 488, 87], [3, 129, 243, 143], [4, 208, 196, 172],
  [5, 265, 179, 143], [6, 432, 146, 171], [7, 651, 210, -129], [8, 743, 455, -96], [9, 776, 767, -94],
  [10, 747, 1021, -68], [11, 556, 1122, 3], [11, 574, 1312, 180], [12, 688, 1409, -74],
  [13, 581, 1519, 5], [14, 460, 1462, 56], [15, 427, 1356, 93]
];
document.querySelector('.edge-numbers').innerHTML = edgeNumbers
  .map(([t, x, y, a]) => `<text transform="translate(${x} ${y}) rotate(${a})" y="20">${t}</text>`).join('');

// resize handles round the selection: x, y, rotation
const handles = [[43, 74, -45], [439, 67, 0], [833, 74, 45], [37, 625, 90], [839, 625, 90], [43, 1178, 45], [439, 1184, 0], [833, 1178, -45]];
document.querySelector('.handles').innerHTML = handles
  .map(([x, y, a]) => `<use href="#handle" x="-20" y="-20" width="40" height="40" transform="translate(${x} ${y}) rotate(${a})"/>`).join('');

const tinyNumbers = {
  left: [[92, 90, -80], [126, 70, 5], [148, 80, -60], [103, 128, 20], [85, 152, 70], [95, 190, 60], [151, 130, 70], [174, 168, 45],
    [211, 196, 30], [228, 230, 90], [185, 246, 0], [216, 249, 0], [87, 230, -40], [60, 262, -60], [70, 274, 10], [107, 261, -50],
    [128, 275, -60], [156, 268, -80], [168, 297, 0], [186, 322, 60], [93, 320, -40], [95, 342, 30], [153, 371, 15], [233, 347, -8],
    [279, 373, 50], [289, 405, -30], [305, 433, 0], [178, 408, -45], [158, 424, -65], [144, 487, -75], [182, 498, 5], [229, 489, 0],
    [244, 489, 0], [260, 510, 8], [284, 503, -70], [313, 502, 60], [331, 493, -50], [385, 473, 10], [400, 473, 50], [195, 82, -30],
    [235, 56, -30], [290, 41, -3], [322, 62, 85], [312, 82, 0], [310, 108, 40], [345, 135, 45], [366, 172, 75], [221, 123, 45],
    [263, 150, 40], [280, 150, 60], [292, 163, 30], [252, 184, 60], [287, 184, 10], [284, 223, 50], [267, 262, 0], [278, 292, 45],
    [328, 340, 5], [354, 265, 75], [387, 242, 40], [404, 187, -30], [432, 205, 60], [460, 280, 75], [417, 330, -80], [430, 310, 40],
    [441, 355, -80], [345, 388, -85], [386, 347, 70], [414, 438, 0], [470, 427, 45], [474, 466, 40], [491, 471, -75],
    [604, 62, 80], [630, 51, 0], [643, 75, 40], [613, 98, 70], [643, 104, 0], [680, 84, -35], [705, 70, -30], [736, 80, 30],
    [753, 99, -60], [730, 107, 0], [686, 128, 45], [724, 130, 5], [745, 152, 85], [699, 173, -50], [768, 205, 50], [673, 200, -50],
    [674, 236, 50], [697, 249, -30], [731, 224, -50], [747, 240, -50], [620, 278, -10], [611, 305, 65], [664, 296, 50], [700, 305, -50],
    [728, 315, 15], [682, 330, 80], [725, 347, -5], [637, 365, 60], [670, 384, -5], [773, 354, -60], [690, 402, 50], [733, 411, -50],
    [563, 300, 80], [562, 325, 80], [590, 355, -50], [553, 375, 0], [578, 370, -45], [583, 417, 60], [552, 428, -40], [598, 432, 80],
    [541, 444, -50], [534, 475, -50], [543, 507, 0], [578, 495, 0], [601, 495, 60], [612, 481, 50], [641, 433, -40], [649, 459, 40],
    [674, 486, 55], [707, 477, -25], [696, 450, 50], [709, 436, -50], [763, 460, -70], [773, 420, -80], [795, 436, -80]],
  right: [[36, 57, 40], [68, 54, 5], [28, 90, 70], [46, 98, 0], [140, 67, 5], [152, 76, -60], [127, 125, -65], [152, 145, -40],
    [41, 124, -15], [15, 137, 40], [185, 82, -80], [197, 157, -85], [184, 211, -60], [174, 265, -85], [40, 172, 30], [58, 190, 70],
    [35, 215, -40], [18, 265, 0], [62, 257, 0], [80, 257, 0], [111, 287, -85], [73, 297, -45], [101, 327, -65], [81, 373, -60],
    [28, 372, -60], [38, 290, -75], [18, 322, 0], [77, 430, 70], [55, 453, -10], [16, 437, 60], [137, 276, 50], [138, 328, -70],
    [173, 310, -85], [140, 355, 50], [158, 352, -50], [293, 82, 20], [318, 65, -30], [345, 58, -30], [363, 52, 60], [399, 43, -5],
    [472, 55, 45], [492, 70, 70], [492, 107, 85], [501, 160, -75], [495, 173, 20], [298, 107, 70], [302, 130, 0], [314, 130, 0],
    [380, 130, 0], [380, 152, 0], [328, 163, -35], [301, 191, -75], [317, 202, 0], [377, 195, 0], [384, 212, -30], [468, 222, -85],
    [328, 238, -25], [382, 250, -10], [387, 266, -10], [326, 278, 0], [315, 296, 60], [352, 310, -10], [361, 333, -25], [298, 335, 30],
    [283, 343, 80], [427, 363, -5], [297, 390, 60], [380, 392, -70], [244, 418, -45], [278, 412, 20], [242, 444, 50], [274, 473, 30],
    [316, 484, 0], [362, 470, -40], [377, 437, -70], [440, 398, -50], [427, 428, 60], [450, 459, 35], [505, 482, 5], [563, 478, -20],
    [582, 455, 75], [554, 425, 15], [528, 377, -80], [517, 341, 50], [530, 332, -60], [506, 249, -25], [534, 241, 60], [575, 255, 0],
    [613, 265, 20], [628, 268, 60], [660, 288, 0], [684, 313, 85], [657, 355, -30], [644, 361, 60], [620, 350, 0], [607, 377, 90],
    [580, 398, -5], [561, 387, -85], [549, 327, -85], [569, 338, -70]]
};
document.querySelectorAll('.tiny-numbers').forEach(g => {
  g.innerHTML = tinyNumbers[g.dataset.sheet]
    .map(([x, y, a], i) => `<text transform="translate(${x} ${y}) rotate(${a})" y="5">${10 + (i * 7) % 89}</text>`).join('');
});
```
